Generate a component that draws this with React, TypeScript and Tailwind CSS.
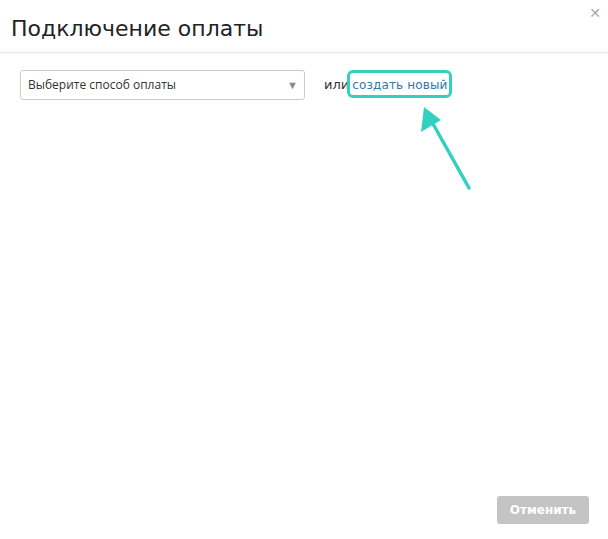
import React from "react";

export default function App() {
    return (
        <div className="relative w-[608px] h-[539px] bg-white overflow-hidden">
            {/* Header */}
            <div className="flex items-start justify-between h-[53px] border-b border-[#e5e5e5] shadow-[0_1px_2px_rgba(0,0,0,0.04)]">
                <h1 className="pl-[11px] pt-[15px] text-[22px] leading-[28px] text-[#222] font-['DejaVu_Sans',sans-serif]">
                    Подключение оплаты
                </h1>
                <button className="mr-[7px] mt-[6px] text-[#a3abb3] text-[14px] leading-none font-['DejaVu_Sans',sans-serif]">
                    ✕
                </button>
            </div>

            {/* Body */}
            <div className="flex items-center pl-[20px] pt-[17px]">
                <div className="flex items-center justify-between w-[285px] h-[30px] border border-[#cccccc] rounded-[3px] pl-[7px] pr-[6px]">
                    <span className="text-[12px] text-[#333] font-['Open_Sans',sans-serif]">
                        Выберите способ оплаты
                    </span>
                    <span className="text-[11px] text-[#8a8a8a]">▼</span>
                </div>
                <span className="ml-[19px] text-[13px] text-[#333] font-['DejaVu_Sans',sans-serif]">
                    или
                </span>
                <a className="ml-[3px] text-[12px] tracking-[0.15px] text-[#2f79a8] font-['DejaVu_Sans',sans-serif]">
                    создать новый
                </a>
            </div>

            {/* Highlight overlay */}
            <div className="absolute left-[347px] top-[70px] w-[105px] h-[28px] border-[3px] border-[#33d0c2] rounded-[6px]" />
            <svg className="absolute left-0 top-0" width="608" height="539">
                <line x1="469" y1="188" x2="432" y2="122" stroke="#33d0c2" strokeWidth="3.5" strokeLinecap="round" />
                <polygon points="424,107 421,132 441,120" fill="#33d0c2" />
            </svg>

            {/* Footer */}
            <div className="absolute right-[19px] bottom-[15px]">
                <button className="w-[92px] h-[28px] rounded-[3px] bg-[#c4c4c4] text-white text-[12px] font-bold font-['DejaVu_Sans',sans-serif]">
                    Отменить
                </button>
            </div>
        </div>
    );
}
